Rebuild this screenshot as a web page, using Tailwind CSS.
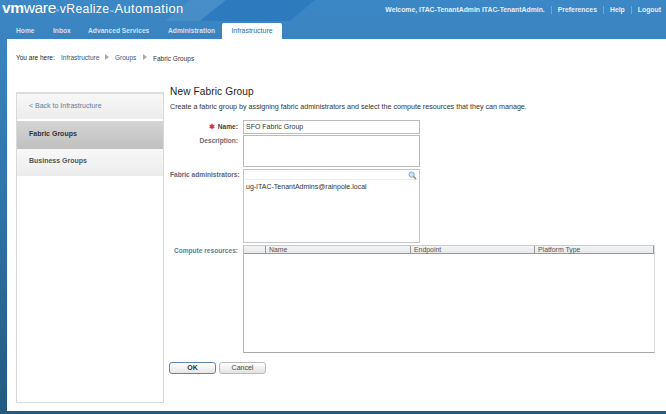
<!DOCTYPE html>
<html>
<head>
<meta charset="utf-8">
<script src="https://cdn.jsdelivr.net/npm/@tailwindcss/browser@4"></script>
</head>
<body class="m-0">
<div class="relative w-[666px] h-[414px] overflow-hidden flex flex-col bg-gradient-to-b from-[#3c87c5] via-[#2f74a8] to-[#235a80] font-['Liberation_Sans',Arial,sans-serif] text-[7px] text-[#333]">
  <svg class="absolute left-0 top-0" width="666" height="39" viewBox="0 0 666 39"><polygon points="165,21 190,0 226,0 200,21" fill="#5a9bd1" opacity=".4"/><polygon points="200,21 226,0 315,0 290,21" fill="#2b78bd" opacity=".85"/></svg>
  <header class="relative h-[23px] flex items-start justify-between pl-[2px] pr-[5px]">
    <div class="flex items-baseline text-white leading-[16px]">
      <span class="text-[15.5px] tracking-[-0.35px]"><b class="font-bold">vm</b>ware</span><span class="text-[4px] self-start mt-[3px]">®</span>
      <span class="text-[12.2px] ml-[1px] tracking-[0.35px]">vRealize</span><span class="text-[4px]">™</span>
      <span class="text-[12.9px] ml-[1px] tracking-[0.4px]">Automation</span>
    </div>
    <div class="flex items-center text-[#e6f0f8] font-bold text-[6.85px] pt-[5px] leading-[9px]">
      <span>Welcome, ITAC-TenantAdmin ITAC-TenantAdmin.</span>
      <span class="w-px h-[8px] bg-[#6fa6d2] mx-[6px]"></span>
      <span>Preferences</span>
      <span class="w-px h-[8px] bg-[#6fa6d2] mx-[6px]"></span>
      <span>Help</span>
      <span class="w-px h-[8px] bg-[#6fa6d2] mx-[6px]"></span>
      <span>Logout</span>
    </div>
  </header>
  <nav class="relative h-[16px] flex items-stretch pl-[16px] text-[6.7px] font-bold text-[#cfe2f2] leading-[16px]">
    <span class="w-[37px]">Home</span>
    <span class="w-[35px]">Inbox</span>
    <span class="w-[80px]">Advanced Services</span>
    <span class="w-[54px]">Administration</span>
    <span class="w-[60px] text-center bg-white text-[#2c6da3] rounded-t-[2px] font-normal text-[7px]">Infrastructure</span>
  </nav>
  <main class="relative ml-[7px] h-[372px] bg-white flex flex-col">
    <div class="h-[54px] pl-[9px] pt-[14px] flex items-start leading-[9px] text-[6.5px]">
      <span class="text-[#222] w-[45px]">You are here:</span>
      <span class="text-[#2d5a84] w-[44px]">Infrastructure</span>
      <span class="w-[10px]"><span class="block w-0 h-0 mt-[1px] border-y-[3px] border-y-transparent border-l-[4px] border-l-[#aaa]"></span></span>
      <span class="text-[#2d5a84] w-[28px]">Groups</span>
      <span class="w-[10px]"><span class="block w-0 h-0 mt-[1px] border-y-[3px] border-y-transparent border-l-[4px] border-l-[#aaa]"></span></span>
      <span class="text-[#333] mt-[1px]">Fabric Groups</span>
    </div>
    <div class="flex items-start pl-[9px] -mt-[1px]">
      <aside class="w-[148px] h-[311px] border border-[#d8d8d8] border-t-[2px] border-t-[#dcdcdc] flex flex-col shrink-0">
        <div class="h-[26px] pl-[12px] pt-[7px] leading-[9px] text-[#5a7f9f] bg-gradient-to-b from-[#f8f8f8] to-[#ececec] border-b border-white text-[7px]">&lt; Back to Infrastructure</div>
        <div class="h-[28px] pl-[12px] pt-[8px] leading-[9px] font-bold text-[#333] bg-gradient-to-b from-[#d4d4d4] to-[#c0c0c0] text-[7px] mt-px">Fabric Groups</div>
        <div class="h-[27px] pl-[12px] pt-[7px] leading-[9px] font-bold text-[#555] bg-gradient-to-b from-[#f8f8f8] to-[#ececec] text-[7px]">Business Groups</div>
      </aside>
      <section class="ml-[6px] flex-1 -mt-[7px]">
        <h1 class="text-[10.1px] font-normal leading-[13px] text-[#222] tracking-[0.12px]">New Fabric Group</h1>
        <p class="mt-[5px] h-[13px] text-[7.15px] leading-[9px] text-[#333]">Create a fabric group by assigning fabric administrators and select the compute resources that they can manage.</p>
        <div class="grid grid-cols-[68px_1fr] gap-x-[5px] mt-[4px] text-[6.6px] leading-[9px] font-bold text-[#555]">
          <label class="text-right whitespace-nowrap pt-[2px] text-[#444]"><span class="text-[#d33] mr-[1px]">✱</span> Name:</label>
          <div class="w-[177px] h-[14px] border border-[#bbb] font-normal text-[7px] text-[#333] pl-[2px] leading-[12px]">SFO Fabric Group</div>
          <label class="text-right whitespace-nowrap mt-[1px] pt-[1px] text-[#6a6a7a]">Description:</label>
          <div class="w-[177px] h-[32px] mt-[1px] border border-[#bbb] bg-white"></div>
          <label class="text-right whitespace-nowrap mt-[2px] pt-[1px] text-[#667]">Fabric administrators:</label>
          <div class="relative w-[177px] h-[74px] mt-[2px] border border-[#c4c4c4] font-normal text-[7px] text-[#333]">
            <div class="h-[9px] m-px bg-white border-b border-[#eee]"></div>
            <svg class="absolute right-[2px] top-[1px]" width="9" height="9" viewBox="0 0 9 9"><circle cx="3.6" cy="3.6" r="2.6" fill="#cfe3f5" stroke="#7fa8cc" stroke-width="1"/><path d="M5.6 5.6 8 8" stroke="#9a8a5a" stroke-width="1.5"/></svg>
            <div class="pl-[2px] mt-[2px] leading-[9px]">ug-ITAC-TenantAdmins@rainpole.local</div>
          </div>
          <label class="text-right whitespace-nowrap mt-[2px] pt-[1px] text-[#5c7f92]">Compute resources:</label>
          <div class="w-[412px] h-[108px] mt-[2px] border border-[#bbb] border-t-[#ccc] border-r-[#ddd] border-b-[#aaa]">
            <div class="flex h-[7px] bg-gradient-to-b from-[#f2f4f6] to-[#e6e8ea] border-b border-[#999] box-content font-normal text-[6.9px] text-[#555] leading-[8px]">
              <span class="w-[22px] border-r border-[#999]"></span>
              <span class="w-[145px] pl-[3px] border-r border-[#999]">Name</span>
              <span class="w-[124px] pl-[3px] border-r border-[#999]">Endpoint</span>
              <span class="flex-1 pl-[3px] border-r border-[#999]">Platform Type</span>
            </div>
          </div>
        </div>
        <div class="flex gap-[3px] mt-[9px] -ml-px text-[7px] font-bold leading-[10px] text-[#333]">
          <span class="w-[47px] h-[11.5px] text-center border border-[#5f86ad] rounded-[3px] bg-gradient-to-b from-white to-[#e6e6e6]">OK</span>
          <span class="w-[47px] h-[11.5px] text-center border border-[#bbb] rounded-[3px] bg-gradient-to-b from-white to-[#e2e2e2] text-[#444] font-normal">Cancel</span>
        </div>
      </section>
    </div>
  </main>
</div>
</body>
</html>
